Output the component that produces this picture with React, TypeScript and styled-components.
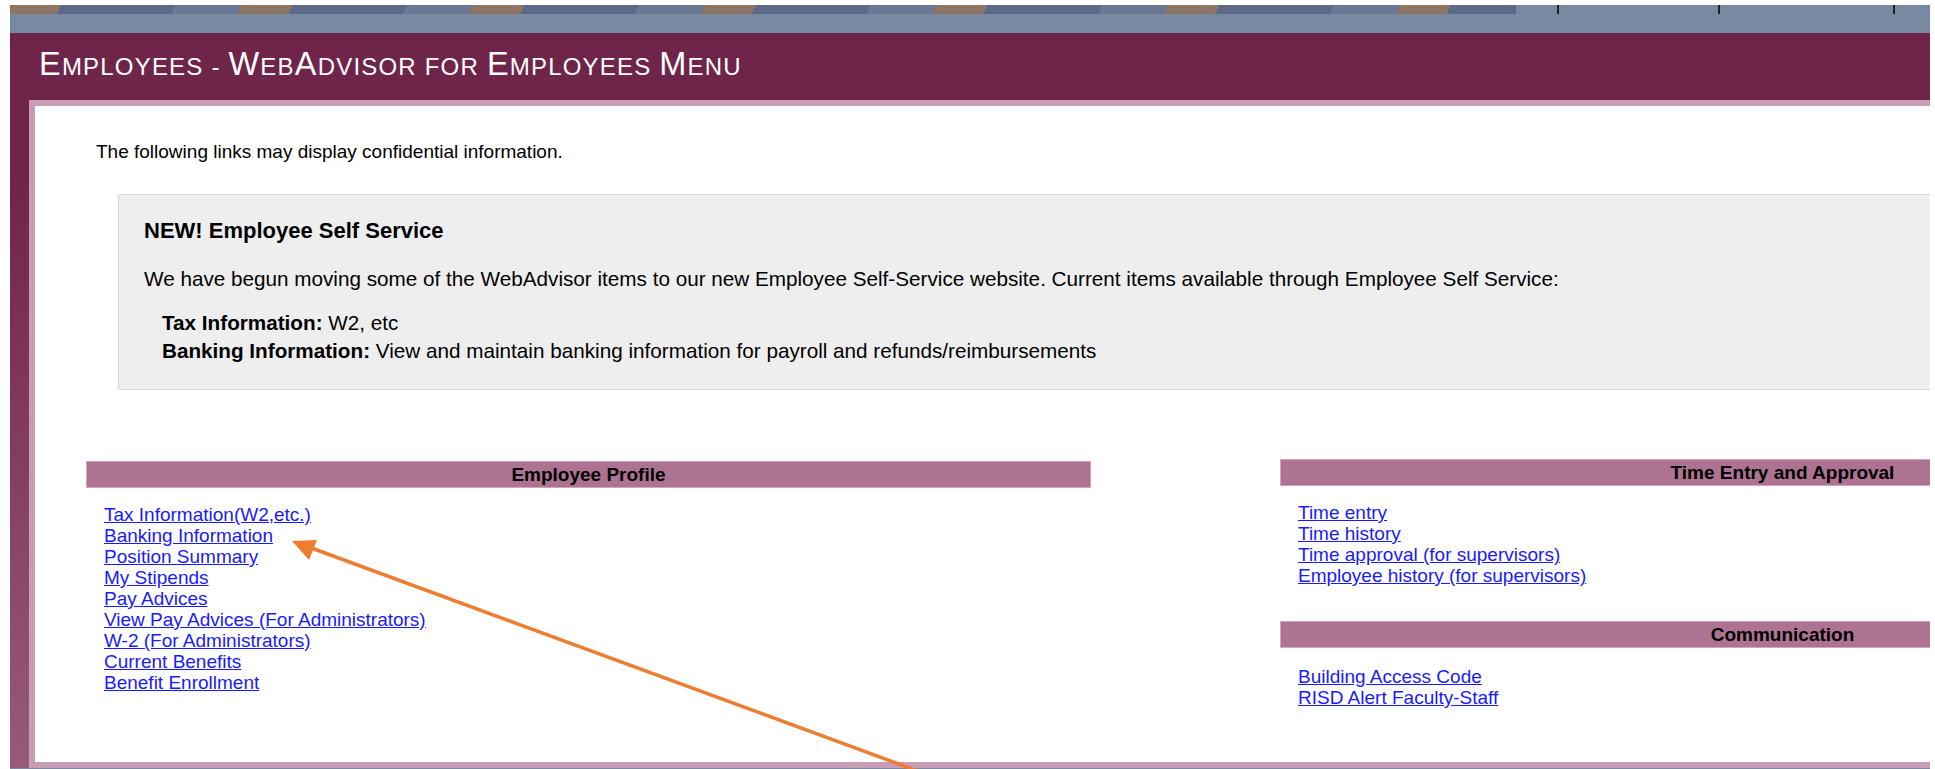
import React from 'react';
import styled, { createGlobalStyle } from 'styled-components';

const pageTitle = 'Employees - WebAdvisor for Employees Menu';

const profileLinks = [
  'Tax Information(W2,etc.)',
  'Banking Information',
  'Position Summary',
  'My Stipends',
  'Pay Advices',
  'View Pay Advices (For Administrators)',
  'W-2 (For Administrators)',
  'Current Benefits',
  'Benefit Enrollment',
];

const timeLinks = ['Time entry', 'Time history', 'Time approval (for supervisors)', 'Employee history (for supervisors)'];

const communicationLinks = ['Building Access Code', 'RISD Alert Faculty-Staff'];

const tabs = [
  { width: 41, edge: false },
  { width: 161, edge: true },
  { width: 175, edge: true },
  { width: 37, edge: true },
];

// capitals keep the full size, the rest is set as smaller capitals
const SmallCapsTitle = ({ text }: { text: string }) => (
  <Title>
    {text.split(/([A-Z])/).map((part, i) =>
      /^[A-Z]$/.test(part) ? <Cap key={i}>{part}</Cap> : <React.Fragment key={i}>{part}</React.Fragment>,
    )}
  </Title>
);

const App = () => {
  return (
    <Page>
      <GlobalStyle />
      <Frame>
        <Banner>
          <BannerStrip>
            <Photo />
            <Tabs>
              {tabs.map((t, i) => (
                <Tab key={i} $width={t.width} $edge={t.edge} />
              ))}
            </Tabs>
          </BannerStrip>
        </Banner>
        <Shell>
          <SmallCapsTitle text={pageTitle} />
          <Content>
            <Notice>The following links may display confidential information.</Notice>
            <InfoBox>
              <InfoHeading>NEW! Employee Self Service</InfoHeading>
              <InfoText>
                We have begun moving some of the WebAdvisor items to our new Employee Self-Service website. Current items
                available through Employee Self Service:
              </InfoText>
              <InfoList>
                <div>
                  <b>Tax Information:</b> W2, etc
                </div>
                <div>
                  <b>Banking Information:</b> View and maintain banking information for payroll and refunds/reimbursements
                </div>
              </InfoList>
            </InfoBox>
            <Columns>
              <Column>
                <SectionBar>Employee Profile</SectionBar>
                <LinkList $top={16}>
                  {profileLinks.map(l => (
                    <MenuLink key={l} href="#">
                      {l}
                    </MenuLink>
                  ))}
                </LinkList>
              </Column>
              <Column $raised>
                <SectionBar>Time Entry and Approval</SectionBar>
                <LinkList $top={16}>
                  {timeLinks.map(l => (
                    <MenuLink key={l} href="#">
                      {l}
                    </MenuLink>
                  ))}
                </LinkList>
                <SectionBar $spaced>Communication</SectionBar>
                <LinkList $top={18}>
                  {communicationLinks.map(l => (
                    <MenuLink key={l} href="#">
                      {l}
                    </MenuLink>
                  ))}
                </LinkList>
              </Column>
            </Columns>
          </Content>
        </Shell>
        <Footer />
      </Frame>
      <Pointer viewBox="0 0 1935 769" width="1935" height="769">
        <line x1="926" y1="774" x2="306" y2="546" stroke="#ed7d31" strokeWidth="3.5" />
        <polygon points="292,541 317,540 309,560" fill="#ed7d31" />
      </Pointer>
    </Page>
  );
};

export default App;

const GlobalStyle = createGlobalStyle`
  html, body {
    margin: 0;
    padding: 0;
    overflow: hidden;
    background: #fff;
  }
  body {
    font-family: "Liberation Sans", Arial, sans-serif;
  }
`;

const Page = styled.div`
  position: relative;
  padding: 5px 5px 0 10px;
  width: 1935px;
  height: 769px;
  box-sizing: border-box;
  overflow: hidden;
`;

const Frame = styled.div`
  width: 1920px;
  overflow: hidden;
`;

const Banner = styled.div`
  height: 28px;
  background: #778aa2;
`;

const BannerStrip = styled.div`
  display: flex;
  height: 9px;
`;

const Photo = styled.div`
  flex: 1;
  background: repeating-linear-gradient(115deg, #8f7566 0 46px, #5b6a88 46px 150px, #6a7894 150px 210px);
`;

const Tabs = styled.div`
  display: flex;
  background: #778aa2;
`;

const Tab = styled.div<{ $width: number; $edge: boolean }>`
  box-sizing: border-box;
  width: ${p => p.$width}px;
  border-left: ${p => (p.$edge ? '2px solid #1d2128' : 'none')};
`;

const Shell = styled.div`
  background: linear-gradient(180deg, #6f2449 0px, #6f2449 140px, #975a7b 100%);
  padding-left: 19px;
`;

const Title = styled.h1`
  margin: 0;
  height: 67px;
  box-sizing: border-box;
  padding: 13px 0 0 10px;
  color: #fff;
  font-family: 'Liberation Sans', Arial, sans-serif;
  font-size: 24px;
  line-height: 37px;
  font-weight: normal;
  letter-spacing: 1.2px;
  text-transform: uppercase;
  white-space: nowrap;
`;

const Cap = styled.span`
  font-size: 32.5px;
`;

const Content = styled.div`
  height: 656px;
  border: 6px solid #c99db5;
  border-right: none;
  background: #fff;
  overflow: hidden;
  color: #000;
`;

const Notice = styled.div`
  margin: 35px 0 0 61px;
  font-size: 19px;
  line-height: 22px;
`;

const InfoBox = styled.div`
  margin: 31px 0 0 83px;
  width: 1850px;
  padding: 23px 25px 24px;
  background: #eeeeee;
  border: 1px solid #d9d9d9;
`;

const InfoHeading = styled.div`
  font-size: 22px;
  line-height: 26px;
  font-weight: bold;
`;

const InfoText = styled.div`
  margin-top: 21px;
  font-size: 20.7px;
  line-height: 28px;
  white-space: nowrap;
`;

const InfoList = styled.div`
  margin: 16px 0 0 18px;
  font-size: 20.7px;
  line-height: 28px;
`;

const Columns = styled.div`
  display: flex;
  gap: 189px;
  margin-top: 71px;
  padding-left: 51px;
`;

const Column = styled.div<{ $raised?: boolean }>`
  width: 1005px;
  flex-shrink: 0;
  margin-top: ${p => (p.$raised ? '-2px' : '0')};
`;

const SectionBar = styled.div<{ $spaced?: boolean }>`
  height: 25px;
  margin-top: ${p => (p.$spaced ? '35px' : '0')};
  background: #ad7390;
  border: 1px solid #d1a5bb;
  text-align: center;
  font-size: 19px;
  line-height: 25px;
  font-weight: bold;
  color: #000;
`;

const LinkList = styled.div<{ $top: number }>`
  display: flex;
  flex-direction: column;
  align-items: flex-start;
  margin: ${p => p.$top}px 0 0 18px;
`;

const MenuLink = styled.a`
  color: #1a1aff;
  text-decoration: underline;
  font-size: 19px;
  line-height: 21px;
`;

const Footer = styled.div`
  height: 20px;
  background: #778aa2;
`;

const Pointer = styled.svg`
  position: absolute;
  top: 0;
  left: 0;
  pointer-events: none;
`;
